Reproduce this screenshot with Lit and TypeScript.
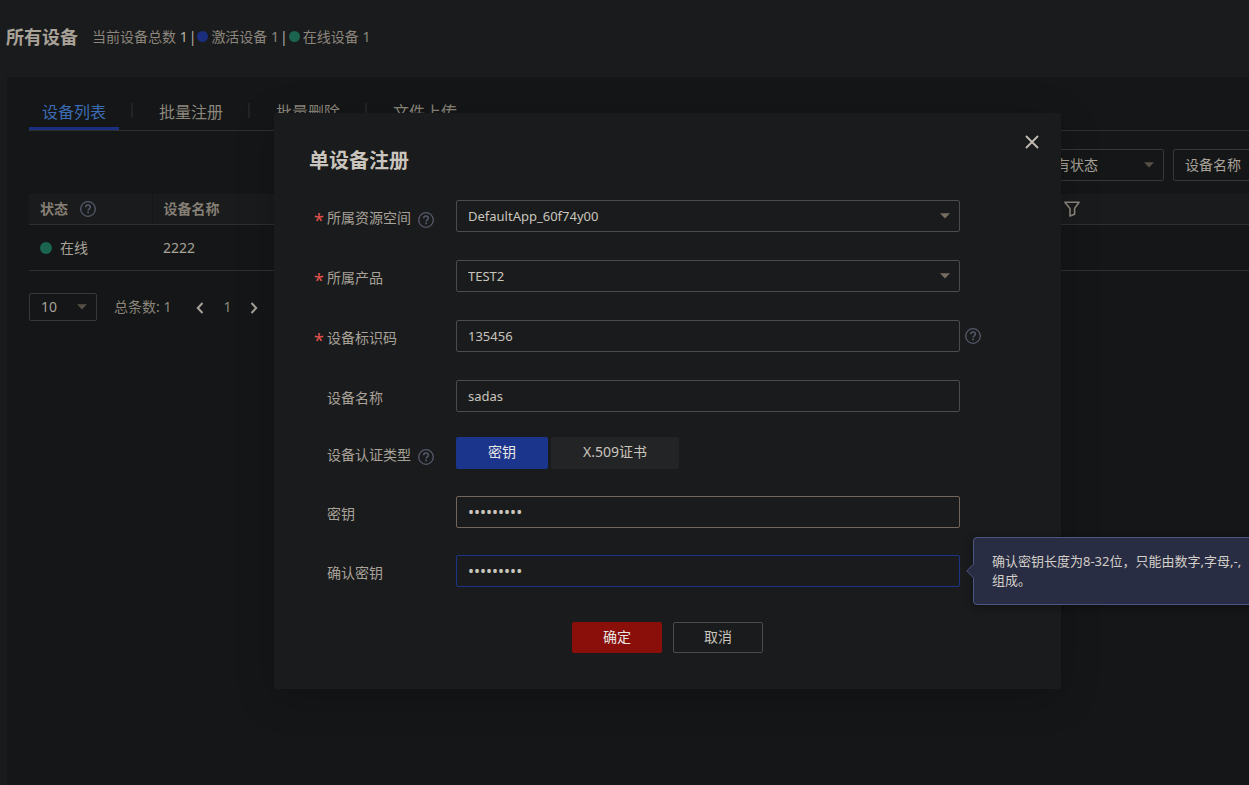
import { LitElement, html, css, nothing } from "lit";
import { customElement, property } from "lit/decorators.js";
import { classMap } from "lit/directives/class-map.js";

const fontStack = css`"Noto Sans", "Noto Sans CJK SC", sans-serif`;

/** Round question-mark hint icon. */
@customElement("help-icon")
export class HelpIcon extends LitElement {
  static styles = css`
    :host {
      display: inline-flex;
      flex: none;
      color: #555a6b;
    }
    .icon {
      display: block;
      width: 16px;
      height: 16px;
    }
  `;
  render() {
    return html`<svg class="icon" viewBox="0 0 16 16" fill="none" stroke="currentColor" aria-hidden="true">
      <circle cx="8" cy="8" r="7.3" stroke-width="1.3"></circle>
      <path d="M5.7 6.3C5.7 4.9 6.7 4.1 8 4.1s2.3.8 2.3 2.1c0 1.6-2.2 1.6-2.2 3.4" stroke-width="1.5"></path>
      <path d="M8.1 10.6v1.6" stroke-width="1.7"></path>
    </svg>`;
  }
}

/** Drop-down with a solid triangle marker. */
@customElement("drop-down")
export class DropDown extends LitElement {
  @property() value = "";
  @property() label = "";
  @property({ type: Boolean, reflect: true }) strong = false;

  static styles = css`
    :host {
      display: grid;
      height: 32px;
      color: #a8a299;
      --line: #36383a;
      --mark: #564f46;
    }
    :host([strong]) {
      font-size: 13px;
      color: #c9c5bd;
      --line: #4a4b4d;
      --mark: #766c60;
    }
    .select {
      grid-area: 1 / 1;
      box-sizing: border-box;
      width: 100%;
      height: 100%;
      margin: 0;
      padding: 0 24px 1px 11px;
      border: 1px solid var(--line);
      border-radius: 2px;
      outline: none;
      appearance: none;
      background: transparent;
      color: inherit;
      font: inherit;
    }
    .mark {
      grid-area: 1 / 1;
      justify-self: end;
      align-self: center;
      width: 10px;
      height: 6px;
      margin: 0 10px 1px 0;
      fill: var(--mark);
      pointer-events: none;
    }
  `;
  render() {
    return html`
      <select class="select" aria-label=${this.label}>
        <option selected>${this.value}</option>
      </select>
      <svg class="mark" viewBox="0 0 10 6" aria-hidden="true"><path d="M0 .2h10L5 5.6z"></path></svg>
    `;
  }
}

/** The dimmed page below the dialog: summary, tabs, device table, pager. */
@customElement("device-page")
export class DevicePage extends LitElement {
  static styles = css`
    :host {
      display: flex;
      flex-direction: column;
      min-height: 100vh;
      color: #8c867c;
    }
    .summary {
      display: flex;
      align-items: center;
      height: 77px;
      padding: 0 6px 4px;
      box-sizing: border-box;
      white-space: nowrap;
    }
    .title {
      margin: 0 14px 0 0;
      font-size: 18px;
      line-height: 24px;
      color: #a8a299;
    }
    .bright {
      color: #b5b0a8;
    }
    .dot {
      flex: none;
      width: 12px;
      height: 12px;
      border-radius: 50%;
    }
    .blue {
      background: #1a2e7d;
    }
    .green {
      background: #1a6450;
    }
    .stats {
      display: flex;
      align-items: center;
      gap: 1px;
    }
    .stats .dot {
      width: 11px;
      height: 11px;
      margin-right: 2px;
    }
    .panel {
      flex: 1;
      width: calc(100% + 80px);
      box-sizing: border-box;
      margin-left: 7px;
      padding: 17px 0 0 22px;
      background: #141617;
    }
    .tabs {
      display: flex;
      align-items: center;
      border-bottom: 1px solid #2d2f31;
    }
    .tab {
      height: 36px;
      padding: 2px 13px 0;
      border: 0;
      border-bottom: 3px solid transparent;
      background: none;
      color: inherit;
      font: inherit;
      font-size: 16px;
      line-height: 24px;
    }
    .tab.active {
      color: #3c6cb4;
      border-color: #1b2f80;
    }
    .bar {
      width: 2px;
      height: 15px;
      margin: 0 13px 4px 12px;
      background: #222426;
    }
    .filters {
      display: flex;
      justify-content: flex-end;
      gap: 9px;
      padding: 18px 0 13px;
    }
    .filter-status {
      width: 134px;
    }
    .filter-field {
      width: 163px;
    }
    .table {
      width: 100%;
      border-collapse: collapse;
      table-layout: fixed;
      text-align: left;
    }
    .table th {
      height: 30px;
      padding: 0 11px;
      border-bottom: 1px solid #2d2f31;
      background: #191b1c;
      color: #857f75;
    }
    .table th + th {
      border-left: 1px solid #141617;
    }
    .table td {
      height: 45px;
      padding: 0 11px;
      border-bottom: 1px solid #2d2f31;
      color: #a8a299;
    }
    .col-status {
      width: 123px;
    }
    .col-action {
      width: 284px;
    }
    .cell {
      display: flex;
      align-items: center;
      gap: 8px;
    }
    .cell.head {
      gap: 12px;
    }
    .funnel {
      display: block;
      width: 16px;
      height: 16px;
    }
    .pager {
      display: flex;
      align-items: center;
      padding-top: 22px;
    }
    .size {
      width: 68px;
      height: 28px;
      margin-right: 17px;
    }
    .step {
      display: flex;
      padding: 1px 0 0;
      border: 0;
      background: none;
      color: #a8a299;
    }
    .arrow {
      width: 8px;
      height: 12px;
    }
    .current {
      margin: 0 19px;
    }
    .previous {
      margin-left: 25px;
    }
  `;

  private tabs = ["设备列表", "批量注册", "批量删除", "文件上传"];

  render() {
    return html`
      <header class="summary">
        <h1 class="title">所有设备</h1>
        <div class="stats">
          <span>当前设备总数 <span class="bright">1</span></span>
          <span class="bright">|</span>
          <i class="dot blue"></i>
          <span>激活设备 1</span>
          <span class="bright">|</span>
          <i class="dot green"></i>
          <span>在线设备 1</span>
        </div>
      </header>
      <main class="panel">
        <nav class="tabs">
          ${this.tabs.map(
            (name, i) => html`${i ? html`<i class="bar"></i>` : nothing}<button
                class=${classMap({ tab: true, active: i === 0 })}
              >${name}</button>`
          )}
        </nav>
        <div class="filters">
          <drop-down class="filter-status" label="状态" value="所有状态"></drop-down>
          <drop-down class="filter-field" label="筛选项" value="设备名称"></drop-down>
        </div>
        <table class="table">
          <colgroup>
            <col class="col-status" />
            <col />
            <col class="col-action" />
          </colgroup>
          <thead>
            <tr>
              <th><span class="cell head">状态 <help-icon></help-icon></span></th>
              <th>设备名称</th>
              <th>
                <svg class="funnel" viewBox="0 0 16 16" fill="none" stroke="#8c867c" stroke-width="1.6" aria-hidden="true">
                  <path d="M.9 1.2h14.2L10.6 7.4v5.8L6 15V7.4z" stroke-linejoin="round"></path>
                </svg>
              </th>
            </tr>
          </thead>
          <tbody>
            <tr>
              <td><span class="cell"><i class="dot green"></i>在线</span></td>
              <td>2222</td>
              <td></td>
            </tr>
          </tbody>
        </table>
        <footer class="pager">
          <drop-down class="size" label="每页条数" value="10"></drop-down>
          <span>总条数: 1</span>
          <button class="step previous" aria-label="上一页">
            <svg class="arrow" viewBox="0 0 8 12" fill="none" stroke="currentColor" stroke-width="2"><path d="M6.5 1 1.8 6l4.7 5"></path></svg>
          </button>
          <span class="current">1</span>
          <button class="step" aria-label="下一页">
            <svg class="arrow" viewBox="0 0 8 12" fill="none" stroke="currentColor" stroke-width="2"><path d="M1.5 1l4.7 5-4.7 5"></path></svg>
          </button>
        </footer>
      </main>
    `;
  }
}

/** Registration dialog for one device. */
@customElement("register-dialog")
export class RegisterDialog extends LitElement {
  static styles = css`
    :host {
      display: block;
      box-sizing: border-box;
      width: 787px;
      max-width: 100%;
      padding: 34px 35px 36px;
      border-radius: 2px;
      background: #1a1b1c;
      box-shadow: 0 8px 40px rgba(0, 0, 0, 0.2);
      color: #a8a299;
    }
    .head {
      display: flex;
      align-items: flex-start;
      justify-content: space-between;
      margin-bottom: 25px;
    }
    .title {
      margin: 0;
      font-size: 20px;
      line-height: 28px;
      color: #c9c5bd;
    }
    .close {
      display: flex;
      margin: -12px -13px 0 0;
      padding: 0;
      border: 0;
      background: none;
      color: #c2bdb5;
    }
    .cross {
      width: 14px;
      height: 14px;
    }
    .form {
      display: flex;
      flex-direction: column;
      gap: 25px;
    }
    .group {
      display: grid;
      gap: 28px;
    }
    .group.secret {
      gap: 27px;
    }
    .row {
      position: relative;
      display: grid;
      grid-template: 32px / 142px minmax(0, 504px) auto;
      padding-left: 5px;
      align-items: center;
    }
    .label {
      display: flex;
      align-items: center;
      align-self: start;
      height: 36px;
    }
    .star {
      width: 13px;
      padding-top: 4px;
      box-sizing: border-box;
      font-size: 18px;
      line-height: 18px;
      color: #e0524d;
    }
    .label help-icon {
      margin: 3px 0 0 7px;
    }
    .after {
      margin-left: 5px;
    }
    .input {
      box-sizing: border-box;
      width: 100%;
      height: 32px;
      margin: 0;
      padding: 0 11px 1px;
      border: 1px solid #4a4b4d;
      border-radius: 2px;
      outline: none;
      background: transparent;
      color: #c9c5bd;
      font: inherit;
      font-size: 13px;
    }
    .input.masked {
      font-size: 16px;
    }
    .input.warm {
      border-color: #70665b;
    }
    .input.focused {
      border-color: #1c3386;
    }
    .segments {
      display: flex;
      gap: 3px;
    }
    .segment {
      height: 32px;
      padding: 0 32px 2px;
      border: 0;
      border-radius: 2px;
      background: #222425;
      color: #c9c5bd;
      font: inherit;
    }
    .segment.on {
      background: #1b358c;
      color: #e8e6e3;
    }
    .actions {
      display: flex;
      justify-content: center;
      gap: 11px;
      margin-top: 35px;
    }
    .action {
      width: 90px;
      height: 31px;
      padding: 0 0 1px;
      border: 1px solid #4a4b4d;
      border-radius: 2px;
      background: transparent;
      color: #c9c5bd;
      font: inherit;
    }
    .action.primary {
      border-color: #8a0e0a;
      background: #8a0e0a;
      color: #e8e6e3;
    }
    .tip {
      position: absolute;
      left: 664px;
      top: -18px;
      box-sizing: border-box;
      width: 300px;
      height: 68px;
      padding: 14px 16px 14px 18px;
      border: 1px solid #4d5585;
      border-radius: 4px;
      background: #292d43;
      box-shadow: 0 2px 10px rgba(0, 0, 0, 0.4);
      color: #d3cfc8;
      font-size: 13px;
      line-height: 19px;
      white-space: nowrap;
    }
    .beak {
      position: absolute;
      right: 100%;
      top: 25px;
      width: 8px;
      height: 16px;
    }
  `;

  private label(id: string, text: string, required = false, help = false) {
    return html`<label class="label" for=${id}>
      <span class="star">${required ? "*" : nothing}</span>${text}${help ? html`<help-icon></help-icon>` : nothing}
    </label>`;
  }

  render() {
    return html`
      <div class="head">
        <h2 class="title">单设备注册</h2>
        <button class="close" aria-label="关闭">
          <svg class="cross" viewBox="0 0 14 14" fill="none" stroke="currentColor" stroke-width="1.8"><path d="M1 1l12 12M13 1L1 13"></path></svg>
        </button>
      </div>
      <form class="form">
        <div class="group">
          <div class="row">
            ${this.label("space", "所属资源空间", true, true)}
            <drop-down id="space" strong label="所属资源空间" value="DefaultApp_60f74y00"></drop-down>
          </div>
          <div class="row">
            ${this.label("product", "所属产品", true)}
            <drop-down id="product" strong label="所属产品" value="TEST2"></drop-down>
          </div>
          <div class="row">
            ${this.label("code", "设备标识码", true)}
            <input id="code" class="input" type="text" value="135456" />
            <help-icon class="after"></help-icon>
          </div>
          <div class="row">
            ${this.label("name", "设备名称")}
            <input id="name" class="input" type="text" value="sadas" />
          </div>
        </div>
        <div class="group secret">
          <div class="row">
            ${this.label("auth", "设备认证类型", false, true)}
            <div class="segments">
              <button id="auth" class="segment on" type="button">密钥</button>
              <button class="segment" type="button">X.509证书</button>
            </div>
          </div>
          <div class="row">
            ${this.label("key", "密钥")}
            <input id="key" class="input masked warm" type="password" value="abcd12345" />
          </div>
          <div class="row">
            ${this.label("confirm", "确认密钥")}
            <input id="confirm" class="input masked focused" type="password" value="abcd12345" />
            <div class="tip" role="tooltip">
              <svg class="beak" viewBox="0 0 8 16" aria-hidden="true">
                <path d="M8 .5L.8 8 8 15.5" fill="#292d43" stroke="#4d5585"></path>
              </svg>
              确认密钥长度为8-32位，只能由数字,字母,-,<br />组成。
            </div>
          </div>
        </div>
      </form>
      <div class="actions">
        <button class="action primary" type="button">确定</button>
        <button class="action" type="button">取消</button>
      </div>
    `;
  }
}

@customElement("app-root")
export class AppRoot extends LitElement {
  static styles = css`
    :host {
      position: relative;
      display: block;
      min-height: 100vh;
      overflow: hidden;
      background: #1a1b1c;
      font-family: ${fontStack};
      font-size: 14px;
      line-height: 20px;
    }
    .overlay {
      position: absolute;
      inset: 0;
      display: flex;
      justify-content: center;
      align-items: flex-start;
      padding: 113px 0 0 86px;
    }
  `;
  render() {
    return html`
      <device-page></device-page>
      <div class="overlay"><register-dialog role="dialog" aria-label="单设备注册"></register-dialog></div>
    `;
  }
}
